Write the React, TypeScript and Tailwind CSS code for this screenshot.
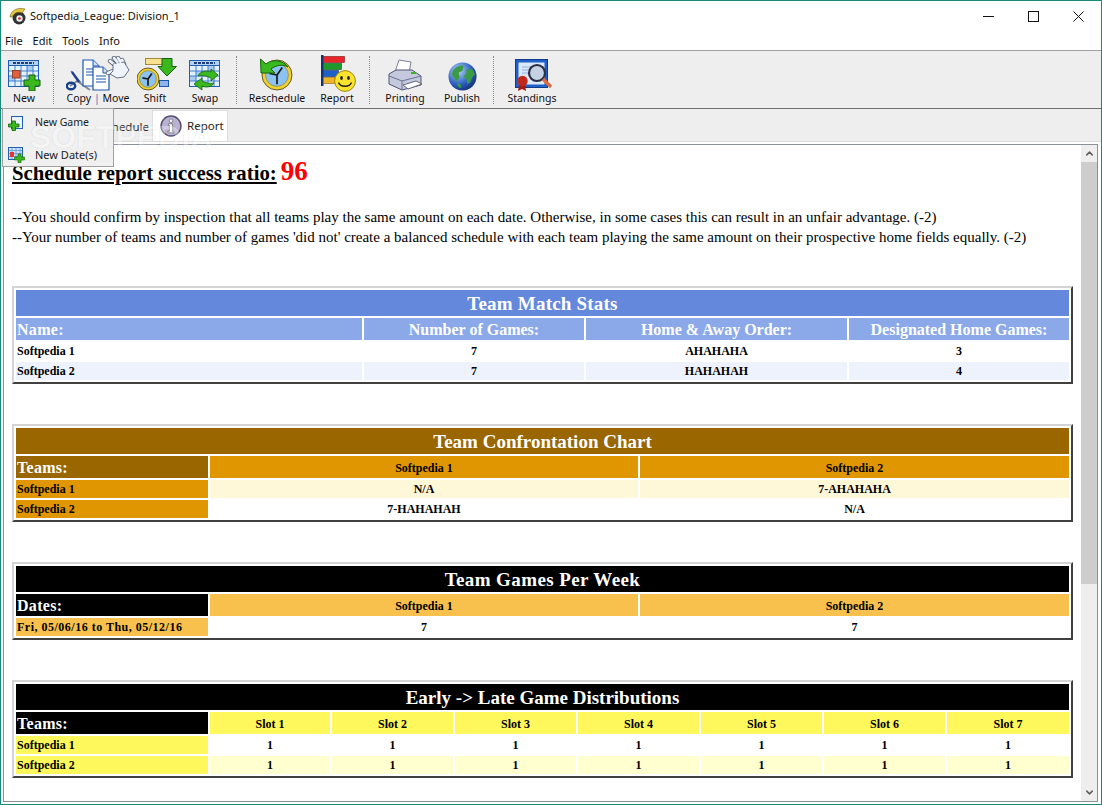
import React from 'react';
import { ChevronUp, ChevronDown } from 'lucide-react';

const CalendarBase = ({ children }: { children?: React.ReactNode }) => (
  <svg width="33" height="31" viewBox="0 0 33 31">
    <rect x="0.5" y="0.5" width="30" height="26" fill="#e4f0fc" stroke="#1f5fb4" />
    <rect x="0.5" y="0.5" width="30" height="5" fill="#b5d2f2" stroke="#1f5fb4" />
    <path d="M5 3h21" stroke="#1d3f7a" strokeWidth="1.8" strokeDasharray="3 1" />
    <rect x="7" y="11" width="6" height="5" fill="#a9cdf2" />
    <rect x="19" y="6" width="6" height="5" fill="#a9cdf2" />
    <rect x="1" y="16" width="6" height="5" fill="#a9cdf2" />
    <path d="M1 11h29M1 16h29M1 21h29M7 6v20M13 6v20M19 6v20M25 6v20" stroke="#2f74cc" strokeWidth="0.9" />
    {children}
  </svg>
);

const NewIcon = () => (
  <CalendarBase>
    <rect x="4.5" y="10.5" width="7.5" height="7.5" fill="#e2603e" stroke="#96402a" />
    <path d="M21 15h6v5h5v6h-5v5h-6v-5h-5v-6h5z" fill="#3cb81f" stroke="#15650c" />
  </CalendarBase>
);

const CopyMoveIcon = () => (
  <svg width="64" height="35" viewBox="0 0 64 35">
    <path d="M5 15l10 12M4 30l7-5 13 9" fill="none" stroke="#7c8596" strokeWidth="1.8" />
    <path d="M6 16l7 10" stroke="#1c3f8e" strokeWidth="2.2" />
    <ellipse cx="5" cy="30" rx="4.2" ry="3.2" fill="none" stroke="#183f8c" strokeWidth="2.4" />
    <path d="M17 4h10l6 6v20H17z" fill="#fff" stroke="#1c55b0" strokeWidth="1.2" />
    <path d="M27 4v6h6" fill="#cfe0f6" stroke="#1c55b0" />
    <path d="M20 13h9M20 16h9M20 19h9" stroke="#1c55b0" />
    <path d="M27 11h10l6 6v17H27z" fill="#fff" stroke="#1c55b0" strokeWidth="1.2" />
    <path d="M37 11v6h6" fill="#cfe0f6" stroke="#1c55b0" />
    <path d="M30 20h10M30 23h10M30 26h10" stroke="#1c55b0" />
    <g fill="none" strokeLinecap="round">
      <g stroke="#5b6274" strokeWidth="4.4">
        <path d="M49 9l-5-4M52 7l-4-5M55 6l-3-4M58 8l-2-4M47 15l-5 2" />
      </g>
      <g stroke="#eef3fc" strokeWidth="2.8">
        <path d="M49 9l-5-4M52 7l-4-5M55 6l-3-4M58 8l-2-4M47 15l-5 2" />
      </g>
    </g>
    <path d="M47 8l11-2 5 8-5 7-7 1-7-4 3-3z" fill="#eef3fc" stroke="#5b6274" strokeWidth="0.9" />
    <path d="M48 8l2 2M51 7l2 2M54 6l1 2" stroke="#eef3fc" strokeWidth="2" />
  </svg>
);

const ClockFace = ({ r }: { r: number }) => (
  <g>
    <circle cx="0" cy="0" r={r} fill="#f0cf2e" stroke="#3f3a16" strokeWidth="0.8" />
    <circle cx="0" cy="0" r={r * 0.76} fill="#8cc2f2" stroke="#8a7a20" strokeWidth="0.6" />
    <path d={`M0 0L${-r * 0.5} ${-r * 0.1}M0 0L${r * 0.35} ${-r * 0.5}M0 0V${r * 0.62}`} stroke="#1a1a1a" strokeWidth="1.7" />
  </g>
);

const ShiftIcon = () => (
  <svg width="40" height="33" viewBox="0 0 40 33">
    <rect x="8.5" y="0.5" width="18" height="6" fill="#f9e08e" stroke="#a08a40" />
    <rect x="22.5" y="22.5" width="9" height="6" fill="#8eb6ea" stroke="#1c55b0" />
    <path d="M25 0.5h10v8h4.5L30 18 21 8.500h4z" fill="#3cb81f" stroke="#15650c" />
    <g transform="translate(11 21)"><ClockFace r={11} /></g>
  </svg>
);

const SwapIcon = () => (
  <CalendarBase>
    <path d="M9 16c2-5 9-6 13-4V9l7 6-7 6v-3c-4-2-9-3-13-2z" fill="#3cb81f" stroke="#15650c" strokeWidth="0.8" />
    <path d="M25 23c-2 4-8 5-12 3v4L5 24l8-6v3c4 2 8 3 12 2z" fill="#3cb81f" stroke="#15650c" strokeWidth="0.8" />
  </CalendarBase>
);

const RescheduleIcon = () => (
  <svg width="34" height="33" viewBox="0 0 34 33">
    <g transform="translate(17 17)"><ClockFace r={15} /></g>
    <path d="M0.500 1L1 15h14l-4-4c5-4 12-5 17-2-4-6-15-9-22-3z" fill="#3cb81f" stroke="#15650c" />
  </svg>
);

const ReportIcon = () => (
  <svg width="35" height="37" viewBox="0 0 35 37">
    <rect x="0" y="0" width="2.500" height="31" fill="#17306e" />
    <rect x="2.500" y="1.500" width="21" height="6" fill="#e8262a" stroke="#7b1416" strokeWidth="0.6" />
    <rect x="2.500" y="8.500" width="18" height="6" fill="#1e9a2b" stroke="#0d5a14" strokeWidth="0.6" />
    <rect x="2.500" y="15.500" width="15" height="6" fill="#1f5fc8" stroke="#12306e" strokeWidth="0.6" />
    <rect x="2.500" y="22.500" width="12" height="6" fill="#f0b429" stroke="#8a6a10" strokeWidth="0.6" />
    <circle cx="24" cy="26" r="10.4" fill="#fbe22d" stroke="#a08a10" />
    <ellipse cx="20.500" cy="23" rx="1.400" ry="2" fill="#222" />
    <ellipse cx="27.500" cy="23" rx="1.400" ry="2" fill="#222" />
    <path d="M17.500 27.500c2 5 11 5 13 0" fill="none" stroke="#222" strokeWidth="1.500" />
  </svg>
);

const PrinterIcon = () => (
  <svg width="34" height="32" viewBox="0 0 34 32">
    <path d="M7 13L11 1l12 2-2 11z" fill="#fff" stroke="#7b8296" />
    <path d="M1 15l7-4h16l9 6v9L14 31 1 25z" fill="#c4c9de" stroke="#4f5670" />
    <path d="M1 17l13 5 19-5" fill="none" stroke="#6a7290" />
    <path d="M14 22v9" stroke="#6a7290" />
    <path d="M15 26l13-4 6 3-14 5z" fill="#fff" stroke="#5f667e" />
    <rect x="23" y="13" width="5" height="2" fill="#3cb81f" />
  </svg>
);

const GlobeIcon = () => (
  <svg width="29" height="29" viewBox="0 0 30 30">
    <defs>
      <radialGradient id="sea" cx="0.35" cy="0.3" r="0.8">
        <stop offset="0" stopColor="#b5d5f8" />
        <stop offset="0.6" stopColor="#2c5fc0" />
        <stop offset="1" stopColor="#10286e" />
      </radialGradient>
    </defs>
    <circle cx="15" cy="15" r="14.500" fill="url(#sea)" />
    <path d="M5 9c3-4 8-6 11-5l-1 5-4 2 1 5-3 4-3-4-2-3zM19 8l6-1 3 6-3 3-2 5-3 2-1-6-3-2 3-3z" fill="#3b9a44" />
    <path d="M9 22l4 1 1 4-3-1z" fill="#3b9a44" />
  </svg>
);

const StandingsIcon = () => (
  <svg width="38" height="33" viewBox="0 0 38 33">
    <rect x="0.500" y="1.500" width="32" height="28" fill="#1f5fc8" stroke="#123a8a" />
    <rect x="3.500" y="4.500" width="26" height="22" fill="#dbe8f8" />
    <path d="M7 9h11M7 12h9M7 15h7" stroke="#8eb0dc" />
    <circle cx="22" cy="15" r="8" fill="#c5d2e4" stroke="#2a2f45" strokeWidth="2.200" />
    <path d="M28 21l8 8" stroke="#e06a3c" strokeWidth="3.400" />
    <path d="M4 27l-1 6 4-2 4 2-1-6" fill="#a01c14" />
    <circle cx="7.500" cy="23" r="5.200" fill="#c0281c" />
  </svg>
);

const Sep = ({ className }: { className: string }) => <div className={`h-[48px] border-l border-dotted border-[#8a8a8a] ${className}`} />;

const ToolButton = ({ icon, label, className, labelClass }: { icon: React.ReactNode; label: React.ReactNode; className: string; labelClass?: string }) => (
  <div className={`flex flex-col items-center ${className}`}>
    <div className="flex h-[37px] items-end">{icon}</div>
    <span className={`whitespace-nowrap text-[10.5px] leading-[14px] text-[#111] ${labelClass ?? ''}`}>{label}</span>
  </div>
);

type Row = { cells: string[]; bg: string; firstClass?: string };

type TableProps = {
  title: string;
  titleBg: string;
  cols: string;
  head: string[];
  headFirst: string;
  headBg: string;
  firstBg?: string;
  headBig?: boolean;
  rows: Row[];
};

const ReportTable = ({ title, titleBg, cols, head, headFirst, headBg, firstBg, headBig, rows }: TableProps) => (
  <div className="w-[1061px] border-2 border-t-[#d4d4d4] border-l-[#d4d4d4] border-r-[#404040] border-b-[#404040] bg-white p-[2px]">
    <div className={`h-[26px] text-center text-[19px] font-bold leading-[27px] text-white ${titleBg}`}>{title}</div>
    <div className={`mt-[2px] grid gap-[2px] ${cols}`}>
      <div className={`h-[22px] pl-[1px] text-[16px] font-bold leading-[23px] tracking-[0.3px] text-white ${headFirst}`}>{head[0]}</div>
      {head.slice(1).map((h, i) => (
        <div
          key={i}
          className={`h-[22px] text-center font-bold ${headBg} ${headBig ? 'text-[16px] leading-[23px] text-white' : 'text-[12px] leading-[24px] text-black'}`}
        >
          {h}
        </div>
      ))}
      {rows.map((r, ri) =>
        r.cells.map((c, ci) => (
          <div
            key={`${ri}-${ci}`}
            className={`h-[18px] whitespace-nowrap text-[12px] font-bold leading-[18px] text-black ${
              ci === 0 ? `pl-[1px] ${firstBg ?? r.bg} ${r.firstClass ?? ''}` : `text-center ${r.bg}`
            }`}
          >
            {c}
          </div>
        ))
      )}
    </div>
  </div>
);

const Line = ({ children }: { children: React.ReactNode }) => <p className="h-[20px] whitespace-nowrap text-[15px] leading-[20px] text-black">{children}</p>;

export default function App() {
  return (
    <div className="relative flex h-[805px] w-[1102px] flex-col overflow-hidden border border-[#1a8a78] bg-white font-['Noto_Sans',sans-serif]">
      {/* Title bar */}
      <div className="flex h-[30px] shrink-0 items-center">
        <svg className="ml-[8px]" width="18" height="18" viewBox="0 0 18 18">
          <circle cx="10" cy="11" r="6.500" fill="#333" />
          <path d="M1 10C2 3 9 0 16 2l-3 4C9 4 5 6 3 10z" fill="#e8c83c" stroke="#6a5a10" strokeWidth="0.6" />
          <circle cx="10.500" cy="11.500" r="3.200" fill="#eee" />
          <circle cx="10.500" cy="11.500" r="1.300" fill="#c0281c" />
        </svg>
        <span className="ml-[3px] text-[11px] leading-[16px] text-[#111]">Softpedia_League: Division_1</span>
        <div className="ml-auto mr-[17px] flex items-center gap-[34px]">
          <svg width="11" height="11" viewBox="0 0 11 11"><path d="M0 5.500h11" stroke="#111" /></svg>
          <svg width="11" height="11" viewBox="0 0 11 11"><rect x="0.500" y="0.500" width="10" height="10" fill="none" stroke="#111" /></svg>
          <svg width="11" height="11" viewBox="0 0 11 11"><path d="M0.500 0.500l10 10M10.500 0.500l-10 10" stroke="#111" /></svg>
        </div>
      </div>

      {/* Menu */}
      <div className="flex h-[19px] shrink-0 items-center gap-[10px] pl-[4px] pt-[2px] text-[11px] text-[#111]">
        <span>File</span>
        <span>Edit</span>
        <span>Tools</span>
        <span>Info</span>
      </div>

      {/* Toolbar */}
      <div className="flex h-[59px] shrink-0 items-center border-y border-t-[#a0a0a0] border-b-[#707070] bg-[#eeeeee] pl-[5px]">
        <ToolButton className="w-[36px]" icon={<NewIcon />} label="New" />
        <Sep className="ml-[11px]" />
        <ToolButton className="ml-[11px] w-[66px]" icon={<CopyMoveIcon />} label={<>Copy <span className="text-[#3c6fb4]">|</span> Move</>} />
        <ToolButton className="ml-[4px] w-[40px]" icon={<div className="ml-[3px]"><ShiftIcon /></div>} label="Shift" />
        <ToolButton className="ml-[12px] w-[36px]" icon={<SwapIcon />} label="Swap" />
        <Sep className="ml-[13px]" />
        <ToolButton className="ml-[12px] w-[56px]" icon={<RescheduleIcon />} label="Reschedule" />
        <ToolButton className="ml-[12px] w-[40px]" icon={<div className="ml-[3px]"><ReportIcon /></div>} label="Report" labelClass="-mt-[1px]" />
        <Sep className="ml-[12px]" />
        <ToolButton className="ml-[16px] w-[38px]" icon={<PrinterIcon />} label="Printing" />
        <ToolButton className="ml-[21px] w-[34px]" icon={<GlobeIcon />} label="Publish" />
        <Sep className="ml-[14px]" />
        <ToolButton className="ml-[14px] w-[48px]" icon={<div className="ml-[3px]"><StandingsIcon /></div>} label="Standings" />
      </div>

      {/* Tabs */}
      <div className="flex h-[32px] shrink-0 items-end bg-[#eeeeee] pl-[2px]">
        <div className="flex h-[28px] w-[149px] items-center justify-end pr-[3px] text-[11.5px] text-[#222]">Schedule</div>
        <div className="flex h-[31px] w-[76px] items-center border-x border-t border-[#dddddd] bg-white pl-[7px] text-[11.5px] text-[#222]">
          <svg width="22" height="22" viewBox="0 0 21 21">
            <circle cx="10.500" cy="10.500" r="9.500" fill="#b9b2d2" stroke="#55506e" strokeWidth="1.400" />
            <circle cx="10.500" cy="5.500" r="1.700" fill="#fff" stroke="#444" strokeWidth="0.5" />
            <path d="M8 8.500h4v7h1.500v1.500h-6V15.500H9V10H8z" fill="#fff" stroke="#444" strokeWidth="0.5" />
          </svg>
          <span className="ml-[5px]">Report</span>
        </div>
      </div>

      {/* Report frame */}
      <div className="flex min-h-0 flex-1 flex-col border-t border-[#dcdcdc] pb-[2px] pl-[2px] pr-[3px] pt-[2px]">
        <div className="flex min-h-0 flex-1 border border-[#8a9098] bg-white">
          <div className="min-w-0 flex-1 overflow-hidden pl-[8px] font-['Liberation_Serif',serif]">
            <div className="mt-[6px] flex h-[30px] items-baseline whitespace-nowrap">
              <span className="text-[20.8px] font-bold text-black underline">Schedule report success ratio:</span>
              <span className="ml-[4px] text-[27px] font-bold text-[#ff0000]">96</span>
            </div>
            <div className="mt-[26px]">
              <Line>--You should confirm by inspection that all teams play the same amount on each date. Otherwise, in some cases this can result in an unfair advantage. (-2)</Line>
              <Line>--Your number of teams and number of games 'did not' create a balanced schedule with each team playing the same amount on their prospective home fields equally. (-2)</Line>
            </div>
            <div className="mt-[39px] flex flex-col gap-[40px]">
              <ReportTable
                title="Team Match Stats"
                titleBg="bg-[#6488dc] tracking-[0.2px]"
                cols="grid-cols-[346px_220px_261px_220px]"
                headFirst="bg-[#8ba8e8]"
                headBg="bg-[#8ba8e8]"
                headBig
                head={['Name:', 'Number of Games:', 'Home & Away Order:', 'Designated Home Games:']}
                rows={[
                  { cells: ['Softpedia 1', '7', 'AHAHAHA', '3'], bg: 'bg-white' },
                  { cells: ['Softpedia 2', '7', 'HAHAHAH', '4'], bg: 'bg-[#eef2fc]' },
                ]}
              />
              <ReportTable
                title="Team Confrontation Chart"
                titleBg="bg-[#996600]"
                cols="grid-cols-[192px_428px_429px]"
                headFirst="bg-[#996600]"
                headBg="bg-[#e09600]"
                firstBg="bg-[#e09600]"
                head={['Teams:', 'Softpedia 1', 'Softpedia 2']}
                rows={[
                  { cells: ['Softpedia 1', 'N/A', '7-AHAHAHA'], bg: 'bg-[#fff8d8]' },
                  { cells: ['Softpedia 2', '7-HAHAHAH', 'N/A'], bg: 'bg-white' },
                ]}
              />
              <ReportTable
                title="Team Games Per Week"
                titleBg="bg-black tracking-[0.4px]"
                cols="grid-cols-[192px_428px_429px]"
                headFirst="bg-black"
                headBg="bg-[#f8c04c]"
                firstBg="bg-[#f8c04c]"
                head={['Dates:', 'Softpedia 1', 'Softpedia 2']}
                rows={[{ cells: ['Fri, 05/06/16 to Thu, 05/12/16', '7', '7'], bg: 'bg-white', firstClass: 'tracking-[0.5px]' }]}
              />
              <ReportTable
                title="Early -> Late Game Distributions"
                titleBg="bg-black"
                cols="grid-cols-[192px_120px_121px_121px_121px_121px_121px_122px]"
                headFirst="bg-black"
                headBg="bg-[#fff85c]"
                firstBg="bg-[#fff85c]"
                head={['Teams:', 'Slot 1', 'Slot 2', 'Slot 3', 'Slot 4', 'Slot 5', 'Slot 6', 'Slot 7']}
                rows={[
                  { cells: ['Softpedia 1', '1', '1', '1', '1', '1', '1', '1'], bg: 'bg-white' },
                  { cells: ['Softpedia 2', '1', '1', '1', '1', '1', '1', '1'], bg: 'bg-[#ffffd0]' },
                ]}
              />
            </div>
          </div>
          {/* Scrollbar */}
          <div className="flex w-[16px] shrink-0 flex-col bg-[#eeeeee]">
            <div className="flex h-[17px] shrink-0 items-center justify-center"><ChevronUp size={11} strokeWidth={3.400} className="text-[#606060]" /></div>
            <div className="h-[422px] bg-[#cdcdcd]" />
            <div className="flex-1" />
            <div className="flex h-[17px] shrink-0 items-center justify-center"><ChevronDown size={11} strokeWidth={3.400} className="text-[#606060]" /></div>
          </div>
        </div>
      </div>

      {/* New dropdown */}
      <div className="absolute left-[1px] top-[107px] h-[59px] w-[112px] border border-[#a0a0a0] bg-[#f0f0f0] text-[#222]">
        <div className="flex h-[28px] items-center pl-[5px]">
          <svg width="15" height="15" viewBox="0 0 15 15">
            <rect x="3.500" y="0.500" width="11" height="12" fill="#eaf2fc" stroke="#1f5fb4" />
            <path d="M4 5h3.500v3H11v3H7.500v3.500H4V11H0.500V8H4z" fill="#3cb81f" stroke="#15650c" strokeWidth="0.8" />
          </svg>
          <span className="ml-[12px] text-[10.5px]">New Game</span>
        </div>
        <div className="mt-[7px] flex h-[22px] items-center pl-[5px]">
          <svg width="17" height="16" viewBox="0 0 17 16">
            <rect x="0.500" y="0.500" width="14" height="12" fill="#cfe4fa" stroke="#1f5fb4" />
            <path d="M0.500 3.500h14M0.500 6.500h14M0.500 9.500h14M4 1v11M8 1v11M12 1v11" stroke="#3f7fd0" strokeWidth="0.6" />
            <rect x="2" y="5" width="4" height="5" fill="#e2372c" />
            <path d="M10 7h3v3h3.500v3H13v3h-3v-3H6.500v-3H10z" fill="#3cb81f" stroke="#15650c" strokeWidth="0.6" />
          </svg>
          <span className="ml-[10px] text-[11px]">New Date(s)</span>
        </div>
      </div>

      {/* Watermark */}
      <div className="pointer-events-none absolute left-[29px] top-[120px] font-['Liberation_Sans',sans-serif] text-[32px] font-bold leading-[32px] text-white opacity-30 [text-shadow:0_0_1px_#777]">
        SOFTPEDIA
      </div>
    </div>
  );
}
